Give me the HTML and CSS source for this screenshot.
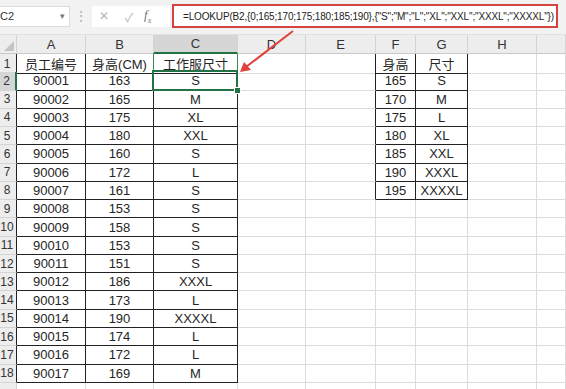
FILE: index.html
```html
<!DOCTYPE html>
<html lang="zh">
<head>
<meta charset="utf-8">
<title>LOOKUP</title>
<link rel="stylesheet" href="styles.css">
</head>
<body>
<div class="toolbar">
  <div class="namebox"><span>C2</span><span class="dd">▾</span></div>
  <div class="dots">⋮</div>
  <div class="fxbox"><span class="ic">✕</span><span class="ic">✓</span><span class="fx"><i>f</i><sub>x</sub></span></div>
  <div class="formula">=LOOKUP(B2,{0;165;170;175;180;185;190},{"S";"M";"L";"XL";"XXL";"XXXL";"XXXXL"})</div>
</div>
<div class="sheet">
  <div class="row head">
    <div class="rh corner"><span class="tri"></span></div>
    <div class="ch">A</div><div class="ch">B</div><div class="ch on">C</div><div class="ch">D</div><div class="ch">E</div><div class="ch">F</div><div class="ch">G</div><div class="ch">H</div><div class="ch"></div>
  </div>
  <div class="row"><div class="rh">1</div><div class="t">员工编号</div><div class="t">身高(CM)</div><div class="t c1">工作服尺寸</div><div></div><div class="tl"></div><div class="t">身高</div><div class="t">尺寸</div><div></div><div></div></div>
  <div class="row"><div class="rh on">2</div><div class="t">90001</div><div class="t">163</div><div class="t sel">S</div><div></div><div class="tl"></div><div class="t">165</div><div class="t">S</div><div></div><div></div></div>
  <div class="row"><div class="rh">3</div><div class="t">90002</div><div class="t">165</div><div class="t">M</div><div></div><div class="tl"></div><div class="t">170</div><div class="t">M</div><div></div><div></div></div>
  <div class="row"><div class="rh">4</div><div class="t">90003</div><div class="t">175</div><div class="t">XL</div><div></div><div class="tl"></div><div class="t">175</div><div class="t">L</div><div></div><div></div></div>
  <div class="row"><div class="rh">5</div><div class="t">90004</div><div class="t">180</div><div class="t">XXL</div><div></div><div class="tl"></div><div class="t">180</div><div class="t">XL</div><div></div><div></div></div>
  <div class="row"><div class="rh">6</div><div class="t">90005</div><div class="t">160</div><div class="t">S</div><div></div><div class="tl"></div><div class="t">185</div><div class="t">XXL</div><div></div><div></div></div>
  <div class="row"><div class="rh">7</div><div class="t">90006</div><div class="t">172</div><div class="t">L</div><div></div><div class="tl"></div><div class="t">190</div><div class="t">XXXL</div><div></div><div></div></div>
  <div class="row"><div class="rh">8</div><div class="t">90007</div><div class="t">161</div><div class="t">S</div><div></div><div class="tl"></div><div class="t">195</div><div class="t">XXXXL</div><div></div><div></div></div>
  <div class="row"><div class="rh">9</div><div class="t">90008</div><div class="t">153</div><div class="t">S</div><div></div><div></div><div></div><div></div><div></div><div></div></div>
  <div class="row"><div class="rh">10</div><div class="t">90009</div><div class="t">158</div><div class="t">S</div><div></div><div></div><div></div><div></div><div></div><div></div></div>
  <div class="row"><div class="rh">11</div><div class="t">90010</div><div class="t">153</div><div class="t">S</div><div></div><div></div><div></div><div></div><div></div><div></div></div>
  <div class="row"><div class="rh">12</div><div class="t">90011</div><div class="t">151</div><div class="t">S</div><div></div><div></div><div></div><div></div><div></div><div></div></div>
  <div class="row"><div class="rh">13</div><div class="t">90012</div><div class="t">186</div><div class="t">XXXL</div><div></div><div></div><div></div><div></div><div></div><div></div></div>
  <div class="row"><div class="rh">14</div><div class="t">90013</div><div class="t">173</div><div class="t">L</div><div></div><div></div><div></div><div></div><div></div><div></div></div>
  <div class="row"><div class="rh">15</div><div class="t">90014</div><div class="t">190</div><div class="t">XXXXL</div><div></div><div></div><div></div><div></div><div></div><div></div></div>
  <div class="row"><div class="rh">16</div><div class="t">90015</div><div class="t">174</div><div class="t">L</div><div></div><div></div><div></div><div></div><div></div><div></div></div>
  <div class="row"><div class="rh">17</div><div class="t">90016</div><div class="t">172</div><div class="t">L</div><div></div><div></div><div></div><div></div><div></div><div></div></div>
  <div class="row"><div class="rh">18</div><div class="t">90017</div><div class="t">169</div><div class="t">M</div><div></div><div></div><div></div><div></div><div></div><div></div></div>
  <div class="row"><div class="rh"></div><div></div><div></div><div></div><div></div><div></div><div></div><div></div><div></div><div></div></div>
</div>
<svg class="arrow" width="566" height="389" viewBox="0 0 566 389">
  <line x1="293" y1="31" x2="246" y2="67" stroke="#e0413b" stroke-width="2"/>
  <polygon points="240,72 244,62 251,70" fill="#e0413b"/>
</svg>
</body>
</html>
```
FILE: styles.css
```css
html, body {
  margin: 0;
  padding: 0;
  width: 566px;
  height: 389px;
  overflow: hidden;
  background: #ffffff;
  font-family: "Liberation Sans", "Noto Sans CJK SC", sans-serif;
  color: #262626;
}

.toolbar {
  height: 35px;
  background: #f2f2f2;
  display: flex;
  align-items: center;
  box-sizing: border-box;
  border-bottom: 1px solid #e0e0e0;
  position: relative;
}

.namebox {
  width: 70px;
  height: 21px;
  margin-top: -2px;
  background: #fff;
  border: 1px solid #dcdcdc;
  border-left: none;
  box-sizing: border-box;
  display: flex;
  align-items: center;
  justify-content: space-between;
  font-size: 11px;
  color: #333;
  padding: 0 4px 0 0;
}
.namebox .dd { font-size: 9px; color: #777; }

.dots {
  width: 22px;
  text-align: center;
  color: #aaa;
  font-size: 12px;
  margin-top: -2px;
}

.fxbox {
  width: 78px;
  height: 21px;
  margin-top: -2px;
  background: #fff;
  box-sizing: border-box;
  display: flex;
  align-items: center;
  color: #b5b5b5;
  font-size: 12px;
}
.fxbox .ic { width: 26px; text-align: center; }
.fxbox .ic:first-child { width: 24px; }
.fxbox .fx { font-family: "Liberation Serif", serif; color: #777; font-size: 13px; margin-left: 2px; }
.fxbox .fx sub { font-size: 8px; font-style: italic; }

.formula {
  margin-left: 2px;
  width: 386px;
  height: 24px;
  margin-top: -2px;
  box-sizing: border-box;
  background: #fff;
  border: 2px solid #d5433e;
  font-size: 10px;
  letter-spacing: -0.16px;
  display: flex;
  align-items: center;
  padding-left: 9px;
  color: #222;
  white-space: nowrap;
  overflow: hidden;
}

.sheet {
  font-size: 13px;
}

.row {
  display: grid;
  grid-template-columns: 17px 69px 68px 84px 68px 70px 40px 52px 69px 1fr;
  height: 18.28px;
}
.row.head { height: 19px; }

.row > div {
  box-sizing: border-box;
  border-right: 1px solid #dcdcdc;
  border-bottom: 1px solid #dcdcdc;
  display: flex;
  align-items: center;
  justify-content: center;
  white-space: nowrap;
  position: relative;
}

.row.head > div {
  background: #ededed;
  border-right-color: #d4d4d4;
  border-bottom-color: #c9c9c9;
  color: #333;
}
.row.head > .ch.on {
  background: #d6d6d6;
  border-bottom: 2px solid #217346;
}

.row > .rh {
  background: #ededed;
  color: #333;
  font-size: 12px;
  padding-right: 2px;
  border-right-color: #222;
  border-bottom-color: #d4d4d4;
}
.row:last-child > .rh { border-right-color: #d4d4d4; }
.row > .rh.on {
  background: #d6d6d6;
  border-right: 2px solid #217346;
}

.row.head > .corner {
  justify-content: flex-end;
  align-items: flex-end;
  padding: 0 2px 2px 0;
}
.tri {
  width: 0;
  height: 0;
  border-left: 10px solid transparent;
  border-bottom: 10px solid #c4c4c4;
}

.row > .t {
  border-right-color: #222;
  border-bottom-color: #222;
}
.row > .tl { border-right-color: #222; }

.row > .c1 {
  border-right-color: #3f8a5c;
}
.row > .c1::before {
  content: "";
  position: absolute;
  left: -1px;
  top: -1px;
  bottom: 0;
  border-left: 1px solid #3f8a5c;
}

.sel::after {
  content: "";
  position: absolute;
  left: -2px;
  top: -2px;
  right: -1px;
  bottom: -1px;
  border: 2px solid #217346;
}
.sel::before {
  content: "";
  position: absolute;
  right: -4px;
  bottom: -4px;
  width: 5px;
  height: 5px;
  background: #217346;
  border: 1px solid #fff;
  z-index: 2;
}

.arrow {
  position: absolute;
  left: 0;
  top: 0;
  pointer-events: none;
}
```
